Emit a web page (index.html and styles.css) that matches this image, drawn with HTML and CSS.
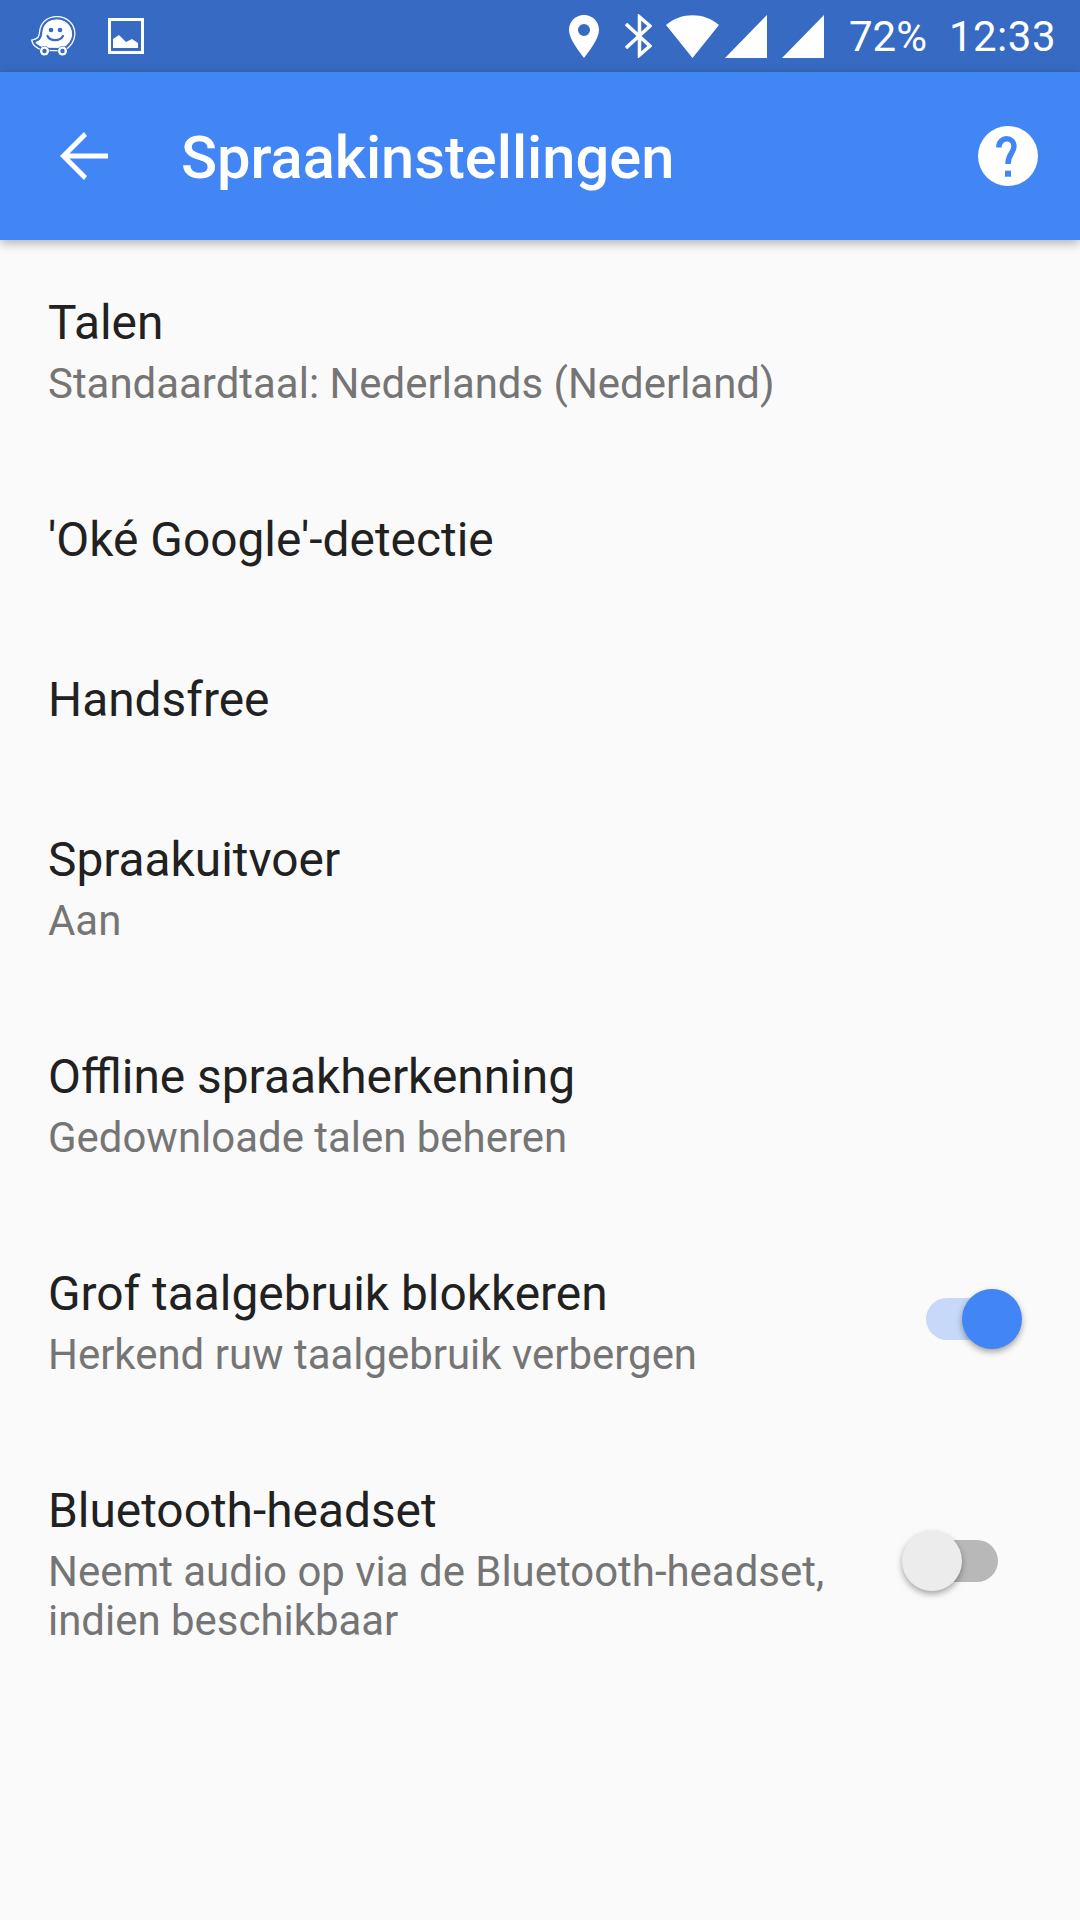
FILE: index.html
```html
<!DOCTYPE html>
<html lang="nl">
<head>
    <meta charset="UTF-8">
    <meta name="viewport" content="width=device-width, initial-scale=1.0">
    <title>Spraakinstellingen</title>
    <link rel="stylesheet" href="styles.css">
</head>
<body>
    <!-- Status bar -->
    <div class="status-bar">
        <div class="status-left">
            <svg class="icon-waze" viewBox="0 0 46 42">
                <path d="M27 3.500C17 3.500 12 10 11.500 17C11 23 9 25 4 26.500C5 30 9 32 13 33.500L33 34C39 31 43 25 43 19C43 10 36 3.500 27 3.500Z" fill="none" stroke="#fff" stroke-width="5"/>
                <path d="M27 3.500C17 3.500 12 10 11.500 17C11 23 9 25 4 26.500C5 30 9 32 13 33.500L33 34C39 31 43 25 43 19C43 10 36 3.500 27 3.500Z" fill="#fff" stroke="#366ac3" stroke-width="2.500"/>
                <path d="M27 4.500C18 4.500 13 10 12.500 17C12 24 10 26 5.500 27C7 30 10 31 14 32.500L33 33C38 30 42 25 42 19C42 11 36 4.500 27 4.500Z" fill="#fff"/>
                <circle cx="14.500" cy="36" r="5" fill="#366ac3"/>
                <circle cx="32.500" cy="36" r="5" fill="#366ac3"/>
                <circle cx="14.500" cy="36" r="4.500" fill="#fff"/>
                <circle cx="32.500" cy="36" r="4.500" fill="#fff"/>
                <circle cx="14.500" cy="36" r="2.200" fill="#366ac3"/>
                <circle cx="32.500" cy="36" r="2.200" fill="#366ac3"/>
                <circle cx="21" cy="15" r="2.300" fill="#366ac3"/>
                <circle cx="30" cy="15" r="2.300" fill="#366ac3"/>
                <path d="M17.500 21C20 26.500 30 26.500 33 21" fill="none" stroke="#366ac3" stroke-width="2.200" stroke-linecap="round"/>
            </svg>
            <svg class="icon-image" viewBox="0 0 36 36">
                <path d="M0 0H36V36H0ZM3 3V33H33V3Z" fill="#fff" fill-rule="evenodd"/>
                <path d="M5 30V21L11 17L18 24L24 21L30 25V30Z" fill="#fff"/>
            </svg>
        </div>
        <div class="status-right">
            <svg class="icon-pin" viewBox="0 0 30 43">
                <path d="M15 0C6.500 0 0 6.500 0 15C0 24 10 36 15 43C20 36 30 24 30 15C30 6.500 23.500 0 15 0ZM15 21A6 6 0 1 1 15 9A6 6 0 0 1 15 21Z" fill="#fff" fill-rule="evenodd"/>
            </svg>
            <svg class="icon-bt" viewBox="0 0 27 44">
                <path d="M1 10L25 32L14.500 41V3L25 12L1 34" fill="none" stroke="#fff" stroke-width="3.500"/>
            </svg>
            <svg class="icon-wifi" viewBox="0 0 53 43">
                <path d="M0 10C15 -3 38 -3 53 10L26.500 43Z" fill="#fff"/>
            </svg>
            <svg class="icon-signal signal-first" viewBox="0 0 42 43">
                <path d="M42 0V43H0Z" fill="#fff"/>
            </svg>
            <svg class="icon-signal" viewBox="0 0 42 43">
                <path d="M42 0V43H0Z" fill="#fff"/>
            </svg>
            <span class="battery">72%</span>
            <span class="clock">12:33</span>
        </div>
    </div>

    <!-- Toolbar -->
    <div class="toolbar">
        <svg class="icon-back" viewBox="0 0 48 48">
            <path d="M48 21.500H9.500L27 4L24 0L0 24L24 48L27 44L9.500 26.500H48Z" fill="#fff"/>
        </svg>
        <h1 class="toolbar-title">Spraakinstellingen</h1>
        <svg class="icon-help" viewBox="0 0 60 60">
            <circle cx="30" cy="30" r="30" fill="#fff"/>
            <path d="M20.800 21.500C20.800 16 25 12.700 28.500 12.700C33 12.700 36 16 36 20C36 27 30 28 30 38" fill="none" stroke="#4285f4" stroke-width="5.500"/>
            <rect x="27" y="44.700" width="6" height="6" fill="#4285f4"/>
        </svg>
    </div>

    <!-- Settings list -->
    <div class="settings-list">
        <div class="row row-two">
            <div class="row-text">
                <div class="row-title">Talen</div>
                <div class="row-sub">Standaardtaal: Nederlands (Nederland)</div>
            </div>
        </div>
        <div class="row row-one">
            <div class="row-text">
                <div class="row-title">'Oké Google'-detectie</div>
            </div>
        </div>
        <div class="row row-one">
            <div class="row-text">
                <div class="row-title">Handsfree</div>
            </div>
        </div>
        <div class="row row-two">
            <div class="row-text">
                <div class="row-title">Spraakuitvoer</div>
                <div class="row-sub">Aan</div>
            </div>
        </div>
        <div class="row row-two">
            <div class="row-text">
                <div class="row-title">Offline spraakherkenning</div>
                <div class="row-sub">Gedownloade talen beheren</div>
            </div>
        </div>
        <div class="row row-two">
            <div class="row-text">
                <div class="row-title">Grof taalgebruik blokkeren</div>
                <div class="row-sub">Herkend ruw taalgebruik verbergen</div>
            </div>
            <div class="switch switch-on"><div class="switch-thumb"></div></div>
        </div>
        <div class="row row-two">
            <div class="row-text">
                <div class="row-title">Bluetooth-headset</div>
                <div class="row-sub">Neemt audio op via de Bluetooth-headset,<br>indien beschikbaar</div>
            </div>
            <div class="switch switch-off"><div class="switch-thumb"></div></div>
        </div>
    </div>
</body>
</html>
```

FILE: styles.css
```css
/* Global */
html, body {
    margin: 0;
    height: 100%;
}

body {
    font-family: 'Roboto', sans-serif;
    background-color: #fafafa;
    color: #212121;
    overflow: hidden;
}

svg {
    display: block;
    flex: none;
}

/* Status bar */
.status-bar {
    height: 72px;
    background-color: #366ac3;
    color: #fff;
    display: flex;
    justify-content: space-between;
    align-items: center;
    font-size: 42px;
}

.status-left {
    display: flex;
    align-items: center;
    padding-left: 30px;
}

.icon-waze {
    width: 46px;
    height: 42px;
}

.icon-image {
    width: 36px;
    height: 36px;
    margin-left: 32px;
}

.status-right {
    display: flex;
    align-items: center;
    padding-right: 24px;
}

.icon-pin {
    width: 30px;
    height: 43px;
}

.icon-bt {
    width: 27px;
    height: 44px;
    margin-left: 26px;
}

.icon-wifi {
    width: 53px;
    height: 43px;
    margin-left: 14px;
}

.icon-signal {
    width: 42px;
    height: 43px;
    margin-left: 15px;
}

.signal-first {
    margin-left: 6px;
}

.icon-signal + .battery {
    margin-left: 25px;
}

.clock {
    margin-left: 22px;
    letter-spacing: 0.5px;
}

/* Toolbar */
.toolbar {
    height: 168px;
    background-color: #4285f4;
    display: flex;
    align-items: center;
    padding: 0 42px 0 60px;
    box-shadow: 0 3px 10px rgba(0, 0, 0, 0.3);
    position: relative;
}

.icon-back {
    width: 48px;
    height: 48px;
}

.toolbar-title {
    flex: 1;
    margin: 4px 0 0 73px;
    color: #fff;
    font-size: 59.6px;
    font-weight: 500;
}

.icon-help {
    width: 60px;
    height: 60px;
}

/* Settings rows */
.row {
    display: flex;
    align-items: flex-start;
    padding: 0 58px 0 48px;
}

.row-two {
    height: 217px;
}

.row-one {
    height: 160px;
}

.row-text {
    flex: 1;
    padding-top: 53px;
}

.row-one .row-text {
    padding-top: 53px;
}

.row-title {
    font-size: 47.85px;
    line-height: 60px;
}

.row-sub {
    font-size: 41.95px;
    line-height: 49px;
    color: #757575;
    margin-top: 6px;
}

/* Switches */
.switch {
    position: relative;
    width: 72px;
    height: 42px;
    margin: 0 24px;
    border-radius: 21px;
}

.switch-on {
    background-color: #c6d9f9;
    margin-top: 87px;
}

.switch-off {
    background-color: #b8b8b8;
    margin-top: 112px;
}

.switch-thumb {
    position: absolute;
    top: -9px;
    width: 60px;
    height: 60px;
    border-radius: 50%;
    box-shadow: 0 3px 6px rgba(0, 0, 0, 0.35);
}

.switch-on .switch-thumb {
    right: -24px;
    background-color: #4285f4;
}

.switch-off .switch-thumb {
    left: -24px;
    background-color: #ececec;
}
```
